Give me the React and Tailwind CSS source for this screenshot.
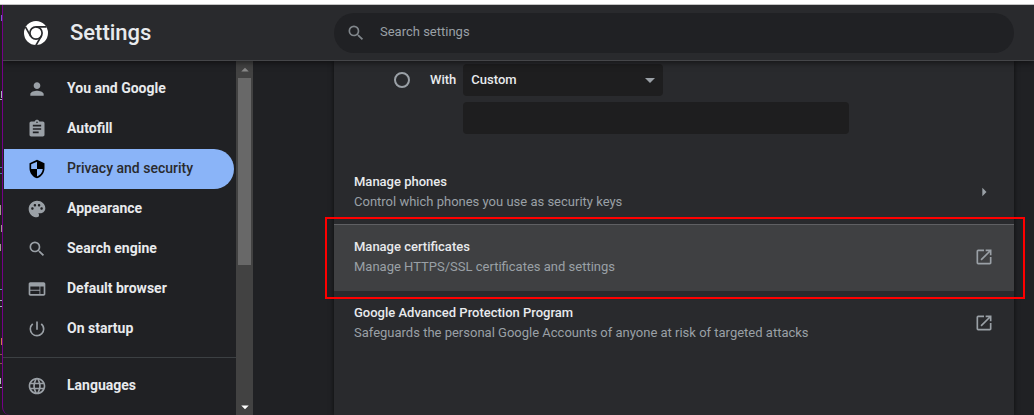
import { useState } from "react";
import {
  MdPerson,
  MdAssignment,
  MdSecurity,
  MdPalette,
  MdSearch,
  MdWeb,
  MdPowerSettingsNew,
  MdLanguage,
  MdArrowDropDown,
  MdArrowDropUp,
  MdArrowRight,
  MdOpenInNew,
} from "react-icons/md";

const primary = [
  { label: "You and Google", Icon: MdPerson },
  { label: "Autofill", Icon: MdAssignment },
  { label: "Privacy and security", Icon: MdSecurity, active: true },
  { label: "Appearance", Icon: MdPalette },
  { label: "Search engine", Icon: MdSearch },
  { label: "Default browser", Icon: MdWeb },
  { label: "On startup", Icon: MdPowerSettingsNew },
];

const secondary = [{ label: "Languages", Icon: MdLanguage }];

function ChromeLogo() {
  return (
    <svg viewBox="0 0 24 24" className="size-6 shrink-0" aria-hidden="true">
      <circle cx="12" cy="12" r="12" fill="#fff" />
      <g stroke="#292a2d" strokeWidth="1.7" fill="none">
        <circle cx="12" cy="12" r="6.1" />
        <path d="M12 5.9H22.6" />
        <path d="M17.3 15.1L12 24.2" />
        <path d="M6.7 15.1L1.4 5.9" />
      </g>
    </svg>
  );
}

/* Sliver of the editor window that lies behind the browser */
function EditorSliver() {
  return (
    <svg className="h-[410px] w-0.5 shrink-0" viewBox="0 0 2 410" aria-hidden="true">
      <g strokeWidth="1" fill="none">
        <path d="M1.5 10V16" stroke="#7c5fd0" />
        <path d="M0 94.5H2M1.5 86V93" stroke="#a9b4c0" />
        <path d="M0 162.5H2M0 168.5H2" stroke="#4a78a8" />
        <path d="M0.5 200V210M1.5 220V227M0.5 239V246" stroke="#a39a92" />
        <path d="M0 284.5H2" stroke="#4f9fb0" />
        <path d="M0 295.5H2M0 301.5H2" stroke="#a9b4c0" />
        <path d="M1.5 333V340" stroke="#ce7b4b" />
        <path d="M0 349.5H2M0 358.5H2" stroke="#8a5a48" />
        <path d="M0.5 373V379M0 382.5H2" stroke="#b8bec6" />
      </g>
    </svg>
  );
}

function NavItem({ label, Icon, active }) {
  return (
    <a
      href="#"
      aria-current={active ? "page" : undefined}
      className={
        active
          ? "ml-px mr-0.5 flex h-10 items-center rounded-r-full bg-[#8ab4f8] pl-[23px] text-sm font-medium text-[#292a2d]"
          : "ml-px mr-0.5 flex h-10 items-center pl-[23px] text-sm font-bold text-[#e8eaed]"
      }
    >
      <Icon className={active ? "mr-5 size-5 text-black" : "mr-5 size-5 text-[#9aa0a6]"} />
      <span className="pb-0.5">{label}</span>
    </a>
  );
}

function Sidebar() {
  return (
    <div className="flex w-[250px] shrink-0">
      <nav className="min-w-0 flex-1 pt-2" aria-label="Settings sections">
        {primary.map((item) => (
          <NavItem key={item.label} {...item} />
        ))}
        <hr className="my-2 border-[#3c4043]" />
        {secondary.map((item) => (
          <NavItem key={item.label} {...item} />
        ))}
      </nav>
      <div className="flex w-[17px] flex-col items-center bg-[#424242]" aria-hidden="true">
        <span className="flex h-[17px] items-center text-[#888888]">
          <MdArrowDropUp className="size-[18px]" />
        </span>
        <span className="h-[187px] w-[13px] bg-[#686868]" />
        <span className="mt-auto flex h-[17px] items-center text-white">
          <MdArrowDropDown className="size-[18px]" />
        </span>
      </div>
    </div>
  );
}

function LinkRow({ title, detail, children, className }) {
  return (
    <a href="#" className={className}>
      <span className="flex-1">
        <span className="block text-[#e8eaed]">{title}</span>
        <span className="block font-normal text-[#9aa0a6]">{detail}</span>
      </span>
      <span className="flex w-5 justify-center text-[#9aa0a6]">{children}</span>
    </a>
  );
}

export default function App() {
  const [resolver, setResolver] = useState("Custom");
  return (
    <div className="flex h-screen flex-col overflow-hidden bg-[#1e1e1e] font-[Roboto,sans-serif]">
      <div className="h-[5px] shrink-0 border-b border-[#c4c4c4] bg-white" />
      <div className="flex min-h-0 flex-1">
        <EditorSliver />
        <div className="flex min-w-0 flex-1 flex-col overflow-hidden rounded-bl-lg border-l border-[#75008a] bg-[#202124]">
          <header className="relative z-10 flex h-14 shrink-0 items-center border-b border-[#454649] bg-[#292a2d] pl-[21px] pr-5 shadow-[0_2px_6px_rgba(0,0,0,0.5)]">
            <div className="flex w-[310px] shrink-0 items-center gap-[22px]">
              <ChromeLogo />
              <h1 className="text-[22px] font-medium text-[#e8eaed]">Settings</h1>
            </div>
            <label className="flex h-10 flex-1 items-center gap-[14px] rounded-full bg-[#202124] pl-3 text-[#80868b]">
              <MdSearch className="size-5 shrink-0" />
              <input
                type="search"
                aria-label="Search settings"
                placeholder="Search settings"
                className="w-full bg-transparent pb-0.5 text-[13px] text-[#e8eaed] outline-none placeholder:text-[#9aa0a6]"
              />
            </label>
          </header>

          <div className="flex min-h-0 flex-1">
            <Sidebar />
            <main className="relative ml-[81px] mr-5 min-w-0 flex-1 bg-[#292a2d] text-[13px] leading-5 font-medium shadow-[0_0_5px_rgba(0,0,0,0.6)]">
              <div className="flex pt-[3px] pl-[60px]">
                <label className="flex h-8 items-center gap-5 text-[#e8eaed]">
                  <input
                    type="radio"
                    name="dns"
                    className="size-4 appearance-none rounded-full border-2 border-[#9aa0a6]"
                  />
                  With
                </label>
                <div className="ml-[7px] flex min-w-0 flex-1 flex-col gap-1.5">
                  <div className="relative w-[200px]">
                    <select
                      aria-label="DNS provider"
                      value={resolver}
                      onChange={(e) => setResolver(e.target.value)}
                      className="h-8 w-full appearance-none rounded bg-[#1e1e1f] px-2 text-[#e8eaed]"
                    >
                      <option>Custom</option>
                    </select>
                    <MdArrowDropDown className="pointer-events-none absolute top-1 right-px size-6 text-[#9aa0a6]" />
                  </div>
                  <input
                    type="text"
                    aria-label="Custom DNS provider"
                    className="h-8 w-[386px] max-w-full rounded bg-[#1e1e1f] px-2 text-[#e8eaed] outline-none"
                  />
                </div>
              </div>

              <div className="mt-[26px]">
                <LinkRow
                  title="Manage phones"
                  detail="Control which phones you use as security keys"
                  className="flex h-16 items-center px-5"
                >
                  <MdArrowRight className="size-5" />
                </LinkRow>
                <div className="relative">
                  <LinkRow
                    title="Manage certificates"
                    detail="Manage HTTPS/SSL certificates and settings"
                    className="flex h-[67px] items-center border-t border-[#5f6063] bg-[#3f4042] px-5 pb-0.5"
                  >
                    <MdOpenInNew className="size-5" />
                  </LinkRow>
                  <div className="pointer-events-none absolute -top-[7px] -right-[11px] -bottom-2 -left-[9px] border-2 border-[#ff0000]" />
                </div>
                <LinkRow
                  title="Google Advanced Protection Program"
                  detail="Safeguards the personal Google Accounts of anyone at risk of targeted attacks"
                  className="flex h-16 items-center px-5"
                >
                  <MdOpenInNew className="size-5" />
                </LinkRow>
              </div>
            </main>
          </div>
        </div>
      </div>
    </div>
  );
}
